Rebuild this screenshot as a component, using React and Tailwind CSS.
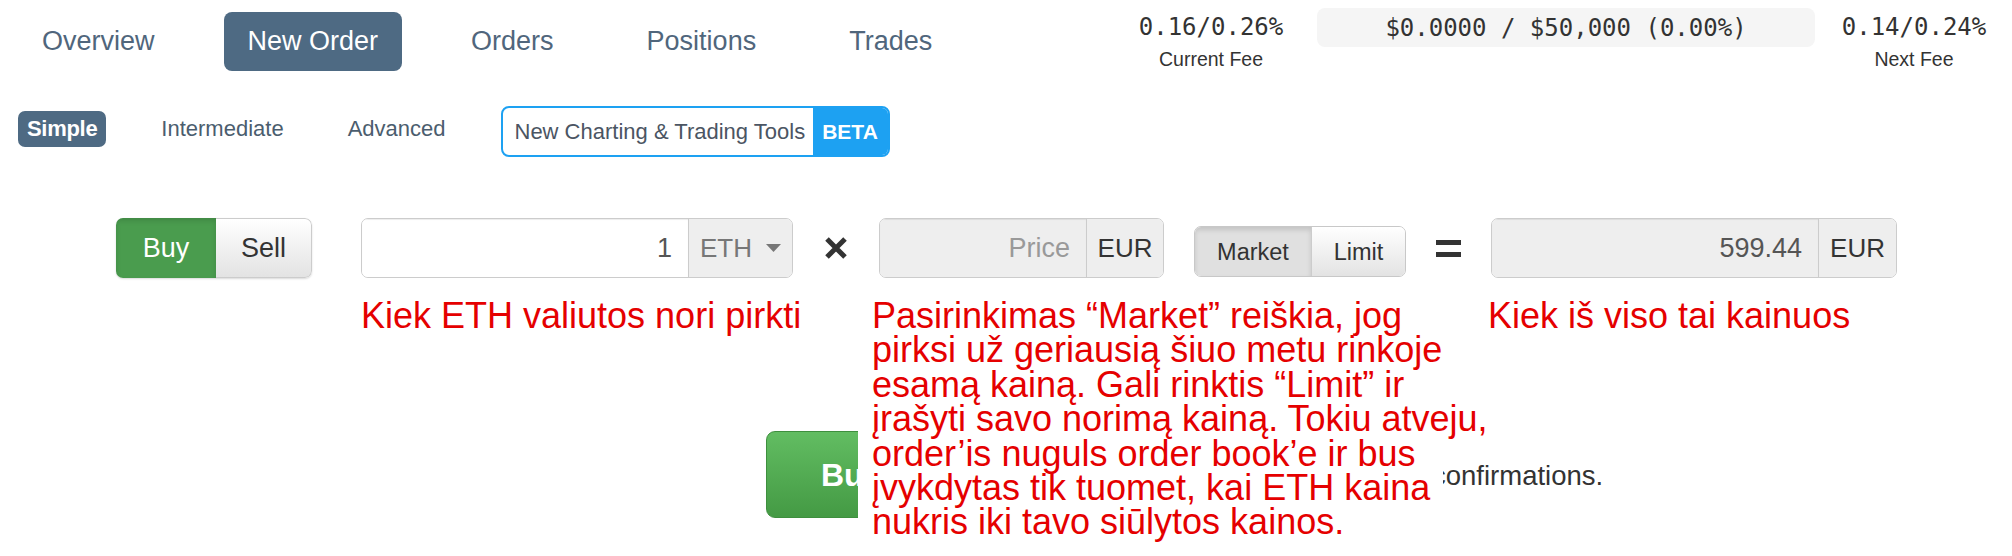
import React from "react";

const sans = { fontFamily: '"Liberation Sans", Arial, sans-serif' };

function NavItem({ children, active }) {
  return (
    <div
      className={
        "h-[59px] px-6 flex items-center rounded-[8px] text-[27px] " +
        (active ? "bg-[#4e6a83] text-white" : "text-[#50667c]")
      }
    >
      {children}
    </div>
  );
}

function FeeCol({ value, label }) {
  return (
    <div className="flex flex-col items-center w-[146px]">
      <div className="text-[24px] leading-[40px] text-[#333] font-['DejaVu_Sans_Mono',monospace] mt-[7px]">{value}</div>
      <div className="text-[19.5px] leading-[22px] text-[#333] mt-[1px]">{label}</div>
    </div>
  );
}

function InputGroup({ width, value, placeholder, addon, caret, disabled, mainW }) {
  return (
    <div className="flex h-[60px] rounded-[7px] border border-[#cccccc] overflow-hidden" style={{ width }}>
      <div
        className={
          "flex items-center justify-end pr-[16px] text-[27px] shadow-[inset_0_1px_1px_rgba(0,0,0,0.075)] " +
          (disabled ? "bg-[#eeeeee]" : "bg-white")
        }
        style={{ width: mainW }}
      >
        {value ? <span className="text-[#555]">{value}</span> : <span className="text-[#999]">{placeholder}</span>}
      </div>
      <div className="flex-1 flex items-center justify-center gap-[14px] bg-[#eeeeee] border-l border-[#cccccc] text-[26px]">
        <span className={caret ? "text-[#777]" : "text-[#333]"}>{addon}</span>
        {caret && (
          <svg width="15" height="9" viewBox="0 0 15 9">
            <path d="M0 0 L15 0 L7.5 8 Z" fill="#777" />
          </svg>
        )}
      </div>
    </div>
  );
}

export default function App() {
  return (
    <div className="relative w-[2012px] h-[556px] bg-white overflow-hidden" style={sans}>
      {/* Row 1 */}
      <div className="flex justify-between items-start pr-[25px]">
        <div className="flex items-center gap-[45px] pl-[18px] pt-[12px]">
          <NavItem>Overview</NavItem>
          <NavItem active>New Order</NavItem>
          <NavItem>Orders</NavItem>
          <NavItem>Positions</NavItem>
          <NavItem>Trades</NavItem>
        </div>
        <div className="flex items-start">
          <FeeCol value="0.16/0.26%" label="Current Fee" />
          <div className="ml-[33px] mr-[26px] mt-[8px] w-[498px] h-[39px] rounded-[8px] bg-[#f5f5f5] flex items-center justify-center text-[24px] text-[#333] font-['DejaVu_Sans_Mono',monospace]">
            $0.0000 / $50,000 (0.00%)
          </div>
          <FeeCol value="0.14/0.24%" label="Next Fee" />
        </div>
      </div>

      {/* Row 2 */}
      <div className="flex items-center gap-[46px] pl-[18px] mt-[35px] text-[22px] text-[#4b5d6e]">
        <div className="h-[36px] px-[9px] -mt-[6px] flex items-center rounded-[7px] bg-[#4e6a83] text-white font-semibold tracking-[-0.3px]">Simple</div>
        <div className="px-[9px] -mt-[6px]">Intermediate</div>
        <div className="px-[9px] -mt-[6px]">Advanced</div>
        <div className="flex h-[51px] w-[389px] rounded-[8px] border-2 border-[#1da1f2] overflow-hidden">
          <div className="flex-1 flex items-center pl-[12px] text-[#4b5563]">New Charting &amp; Trading Tools</div>
          <div className="w-[75px] bg-[#1da1f2] text-white font-bold text-[21px] flex items-center justify-center">BETA</div>
        </div>
      </div>

      {/* Row 3 */}
      <div className="flex items-center pl-[116px] mt-[61px]">
        <div className="flex h-[60px] rounded-[7px] overflow-hidden shadow-[0_1px_2px_rgba(0,0,0,0.15)]">
          <div className="w-[100px] bg-[#4a9c4e] text-white text-[27px] flex items-center justify-center shadow-[inset_0_3px_5px_rgba(0,0,0,0.125)]">Buy</div>
          <div className="w-[96px] bg-gradient-to-b from-white to-[#e3e3e3] border border-l-0 border-[#cccccc] rounded-r-[7px] text-[#333] text-[27px] flex items-center justify-center">Sell</div>
        </div>
        <div className="ml-[49px]">
          <InputGroup width={432} mainW={326} value="1" addon="ETH" caret />
        </div>
        <div className="mx-[31px] w-[24px] h-[24px] flex items-center justify-center">
          <svg width="24" height="24" viewBox="0 0 24 24">
            <path d="M3 3 L21 21 M21 3 L3 21" stroke="#333" strokeWidth="5" />
          </svg>
        </div>
        <InputGroup width={285} mainW={206} placeholder="Price" addon="EUR" disabled />
        <div className="ml-[30px] self-end mb-[1px] flex h-[51px] rounded-[7px] border border-[#c8c8c8] overflow-hidden text-[23.5px] text-[#333]">
          <div className="w-[116px] bg-[#e0e0e0] flex items-center justify-center pt-[3px] shadow-[inset_0_3px_5px_rgba(0,0,0,0.13)]">Market</div>
          <div className="w-[94px] border-l border-[#cccccc] bg-gradient-to-b from-white to-[#e3e3e3] flex items-center justify-center pt-[3px]">Limit</div>
        </div>
        <div className="mx-[30px] w-[25px] flex flex-col gap-[7px]">
          <div className="h-[5px] bg-[#333]" />
          <div className="h-[5px] bg-[#333]" />
        </div>
        <InputGroup width={406} mainW={326} value="599.44" addon="EUR" disabled />
      </div>

      {/* Row 4: place order */}
      <div className="flex items-center pl-[766px] mt-[153px]">
        <div className="h-[87px] w-[330px] rounded-[9px] bg-gradient-to-b from-[#62bd62] to-[#449a44] border border-[#3e8f3e] text-white font-bold text-[32px] flex items-center pl-[54px]">
          Buy
        </div>
        <div className="ml-[336px] text-[27.5px] text-[#333] mt-[2px]">confirmations.</div>
      </div>

      {/* Annotations */}
      <div className="absolute left-[361px] top-[299px] text-[36px] leading-[34px] text-[#e50000] whitespace-nowrap">
        Kiek ETH valiutos nori pirkti
      </div>
      <div className="absolute left-[858px] top-[294px] w-[585px] h-[252px] bg-white pl-[14px] pt-[5px] text-[36px] leading-[34.4px] text-[#e50000] whitespace-nowrap">
        <div>Pasirinkimas “Market” reiškia, jog</div>
        <div>pirksi už geriausią šiuo metu rinkoje</div>
        <div>esamą kainą. Gali rinktis “Limit” ir</div>
        <div>įrašyti savo norimą kainą. Tokiu atveju,</div>
        <div>order’is nuguls order book’e ir bus</div>
        <div>įvykdytas tik tuomet, kai ETH kaina</div>
        <div>nukris iki tavo siūlytos kainos.</div>
      </div>
      <div className="absolute left-[1488px] top-[299px] text-[36px] leading-[34px] text-[#e50000] whitespace-nowrap">
        Kiek iš viso tai kainuos
      </div>
    </div>
  );
}
